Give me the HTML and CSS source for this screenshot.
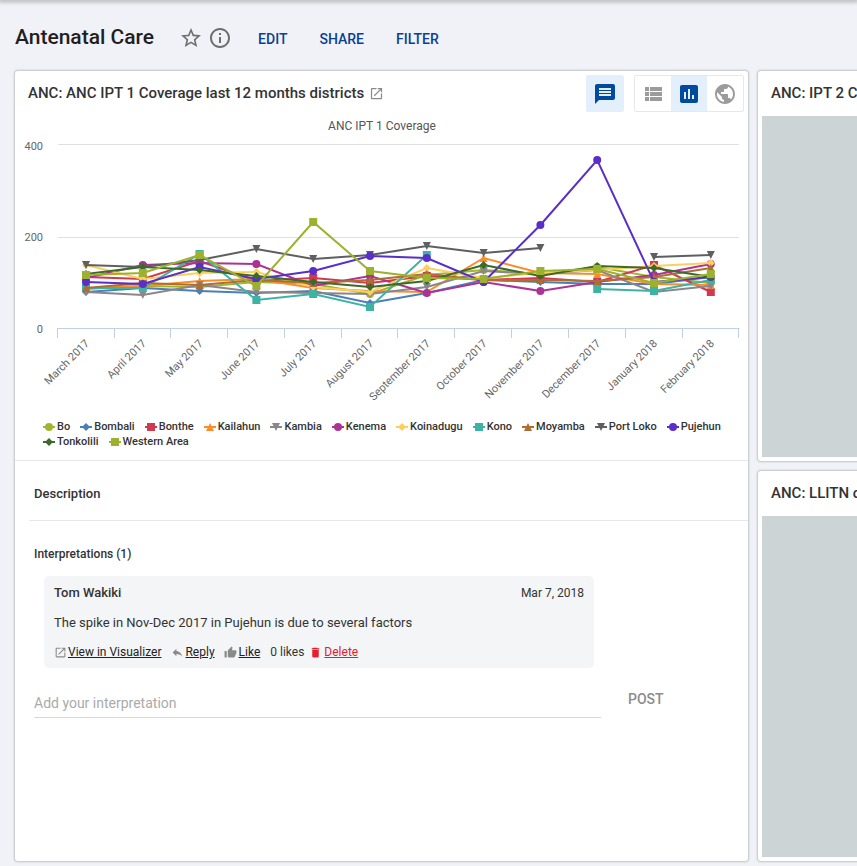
FILE: index.html
```html
<!DOCTYPE html>
<html lang="en">
<head>
    <meta charset="UTF-8">
    <title>Antenatal Care</title>
    <link rel="stylesheet" href="styles.css">
</head>
<body>
<div class="topbar"></div>
<div class="page-head">
    <h1>Antenatal Care</h1>
    <svg class="head-icon star" viewBox="0 0 24 24"><path d="M22 9.24l-7.19-.62L12 2 9.19 8.63 2 9.24l5.46 4.73L5.82 21 12 17.27 18.18 21l-1.63-7.03L22 9.24zM12 15.4l-3.76 2.27 1-4.28-3.32-2.88 4.38-.38L12 6.1l1.71 4.04 4.38.38-3.32 2.88 1 4.28L12 15.4z"/></svg>
    <svg class="head-icon info" viewBox="0 0 24 24"><path d="M11 17h2v-6h-2v6zm1-15C6.48 2 2 6.48 2 12s4.48 10 10 10 10-4.48 10-10S17.52 2 12 2zm0 18c-4.41 0-8-3.59-8-8s3.59-8 8-8 8 3.59 8 8-3.59 8-8 8zM11 9h2V7h-2v2z"/></svg>
    <nav class="head-links">
        <a href="#">EDIT</a>
        <a href="#">SHARE</a>
        <a href="#">FILTER</a>
    </nav>
</div>
<div class="grid">
    <div class="card card-main">
        <div class="card-head">
            <div class="card-title">
                ANC: ANC IPT 1 Coverage last 12 months districts
                <svg class="open-icon" viewBox="0 0 24 24"><path d="M19 19H5V5h7V3H5c-1.11 0-2 .9-2 2v14c0 1.1.89 2 2 2h14c1.1 0 2-.9 2-2v-7h-2v7zM14 3v2h3.59l-9.83 9.83 1.41 1.41L19 6.41V10h2V3h-7z"/></svg>
            </div>
            <div class="tools">
                <span class="tool tool-comment">
                    <svg class="tool-icon blue" viewBox="0 0 24 24"><path d="M20 2H4c-1.1 0-1.99.9-1.99 2L2 22l4-4h14c1.1 0 2-.9 2-2V4c0-1.1-.9-2-2-2zm-2 12H6v-2h12v2zm0-3H6V9h12v2zm0-3H6V6h12v2z"/></svg>
                </span>
                <div class="tool-group">
                    <span class="tool">
                        <svg class="tool-icon" viewBox="0 0 24 24"><path d="M4 14h4v-4H4v4zm0 5h4v-4H4v4zM4 9h4V5H4v4zm5 5h12v-4H9v4zm0 5h12v-4H9v4zM9 5v4h12V5H9z"/></svg>
                    </span>
                    <span class="tool active">
                        <svg class="tool-icon blue" viewBox="0 0 24 24"><path d="M19 3H5c-1.1 0-2 .9-2 2v14c0 1.1.9 2 2 2h14c1.1 0 2-.9 2-2V5c0-1.1-.9-2-2-2zM9 17H7v-7h2v7zm4 0h-2V7h2v10zm4 0h-2v-4h2v4z"/></svg>
                    </span>
                    <span class="tool">
                        <svg class="tool-icon" viewBox="0 0 24 24"><path d="M12 2C6.48 2 2 6.48 2 12s4.48 10 10 10 10-4.48 10-10S17.52 2 12 2zm-1 17.93c-3.95-.49-7-3.85-7-7.93 0-.62.08-1.21.21-1.79L9 15v1c0 1.1.9 2 2 2v1.93zm6.9-2.54c-.26-.81-1-1.39-1.9-1.39h-1v-3c0-.55-.45-1-1-1H8v-2h2c.55 0 1-.45 1-1V7h2c1.1 0 2-.9 2-2v-.41c2.93 1.19 5 4.06 5 7.41 0 2.08-.8 3.97-2.1 5.39z"/></svg>
                    </span>
                </div>
            </div>
        </div>
        <svg id="chart" class="chart" viewBox="15 116 733 300"></svg>
        <div id="legend" class="legend"></div>
        <div class="description">Description</div>
        <div class="interpretations">
            <h3>Interpretations (1)</h3>
            <div class="comment">
                <div class="comment-top">
                    <span class="author">Tom Wakiki</span>
                    <span class="date">Mar 7, 2018</span>
                </div>
                <div class="comment-text">The spike in Nov-Dec 2017 in Pujehun is due to several factors</div>
                <div class="comment-actions">
                    <svg class="act-icon" viewBox="0 0 24 24"><path d="M19 19H5V5h7V3H5c-1.11 0-2 .9-2 2v14c0 1.1.89 2 2 2h14c1.1 0 2-.9 2-2v-7h-2v7zM14 3v2h3.59l-9.83 9.83 1.41 1.41L19 6.41V10h2V3h-7z"/></svg>
                    <a href="#">View in Visualizer</a>
                    <svg class="act-icon reply-icon" viewBox="0 0 24 24"><path d="M10 9V5l-7 7 7 7v-4.1c5 0 8.5 1.6 11 5.1-1-5-4-10-11-11z"/></svg>
                    <a href="#">Reply</a>
                    <svg class="act-icon like-icon" viewBox="0 0 24 24"><path d="M1 21h4V9H1v12zm22-11c0-1.1-.9-2-2-2h-6.31l.95-4.57.03-.32c0-.41-.17-.79-.44-1.06L14.17 1 7.59 7.59C7.22 7.95 7 8.45 7 9v10c0 1.1.9 2 2 2h9c.83 0 1.54-.5 1.84-1.22l3.02-7.05c.09-.23.14-.47.14-.73v-2z"/></svg>
                    <a href="#">Like</a>
                    <span class="likes">0 likes</span>
                    <svg class="act-icon del-icon" viewBox="0 0 24 24"><path d="M6 19c0 1.1.9 2 2 2h8c1.1 0 2-.9 2-2V7H6v12zM19 4h-3.5l-1-1h-7l-1 1H5v2h14V4z"/></svg>
                    <a href="#" class="red-link">Delete</a>
                </div>
            </div>
            <div class="add-row">
                <div class="add-input">Add your interpretation</div>
                <span class="post">POST</span>
            </div>
        </div>
    </div>
    <div class="card card-side">
        <div class="card-title side-title">ANC: IPT 2 Coverage last 12 months districts</div>
        <div class="placeholder"></div>
    </div>
    <div class="card card-side">
        <div class="card-title side-title">ANC: LLITN coverage last 12 months districts</div>
        <div class="placeholder"></div>
    </div>
</div>
<script src="chart.js"></script>
</body>
</html>
```
FILE: styles.css
```css
*{
    margin: 0;
    padding: 0;
    box-sizing: border-box;
}
html,body{
    width: 857px;
    height: 866px;
    overflow: hidden;
}
body{
    background-color: #f1f2f7;
    font-family: Roboto, "Liberation Sans", sans-serif;
    color: #333333;
}
a{
    color: inherit;
}
.topbar{
    height: 0;
    box-shadow: 0 0 4px 2px rgba(0,0,0,.28);
}
.page-head{
    height: 71px;
    padding: 24px 0 0 15px;
    display: flex;
    align-items: flex-start;
}
.page-head h1{
    font-size: 21px;
    line-height: 26px;
    font-weight: 500;
    color: #1f1f1f;
    margin-right: 25px;
}
.head-icon{
    width: 24px;
    height: 24px;
    fill: #6e6e6e;
    margin-top: 2px;
}
.star{
    margin-right: 5px;
}
.head-links{
    margin-left: 26px;
    display: flex;
    gap: 32px;
    padding-top: 7px;
}
.head-links a{
    font-size: 14px;
    line-height: 16px;
    font-weight: 500;
    color: #0b3f94;
    text-decoration: none;
}
.grid{
    display: grid;
    grid-template-columns: 733px 733px;
    grid-template-rows: 390px 390px;
    column-gap: 10px;
    row-gap: 10px;
    margin-left: 15px;
}
.card{
    background-color: #ffffff;
    border-radius: 3px;
    box-shadow: 0 0 2px 1px rgba(0,0,0,.2);
    overflow: hidden;
}
.card-main{
    grid-row: 1 / 3;
}
.card-head{
    height: 45px;
    display: flex;
    justify-content: space-between;
    padding: 4px 4px 0 13px;
}
.card-title{
    font-size: 15px;
    line-height: 16px;
    font-weight: 500;
    color: #333333;
    padding-top: 10px;
    white-space: nowrap;
}
.open-icon{
    width: 15px;
    height: 15px;
    fill: #8a8a8a;
    vertical-align: -3px;
    margin-left: 1px;
}
.tools{
    display: flex;
    gap: 10px;
}
.tool{
    width: 36px;
    height: 37px;
    display: flex;
    align-items: center;
    justify-content: center;
}
.tool-comment{
    width: 38px;
    background-color: #e3f0fb;
    border-radius: 2px;
}
.tool-group{
    display: flex;
    border: 1px solid #e8e8e8;
    border-radius: 2px;
    height: 37px;
}
.tool-group .tool{
    height: 35px;
}
.active{
    background-color: #e3f0fb;
}
.tool-icon{
    width: 24px;
    height: 24px;
    fill: #9b9b9b;
}
.blue{
    fill: #004ba0;
}
.chart{
    display: block;
    width: 733px;
    height: 300px;
}
.chart-title{
    font-size: 12px;
    fill: #555555;
    text-anchor: middle;
}
.y-label{
    font-size: 11px;
    fill: #666666;
    text-anchor: end;
}
.x-label{
    font-size: 11px;
    fill: #666666;
    text-anchor: end;
}
.legend{
    height: 44px;
    padding: 3px 20px 0 28px;
    display: flex;
    flex-wrap: wrap;
    align-content: flex-start;
    column-gap: 10px;
}
.legend-item{
    display: flex;
    align-items: center;
    height: 15px;
    font-size: 11px;
    font-weight: 500;
    color: #333333;
}
.legend-item svg{
    width: 12px;
    height: 12px;
    margin-right: 2px;
}
.description{
    border-top: 1px solid #e8e8e8;
    height: 60px;
    padding: 25px 0 0 19px;
    font-size: 13px;
    line-height: 16px;
    font-weight: 500;
    color: #333333;
}
.description::after{
    content: "";
    display: block;
    border-bottom: 1px solid #e8e8e8;
    margin: 18px 0 0 -5px;
}
.interpretations{
    padding: 26px 0 0 19px;
}
.interpretations h3{
    font-size: 12px;
    line-height: 16px;
    font-weight: 500;
    color: #333333;
}
.comment{
    width: 550px;
    height: 92px;
    margin: 14px 0 0 10px;
    padding: 9px 10px 0;
    background-color: #f4f5f7;
    border-radius: 5px;
}
.comment-top{
    display: flex;
    justify-content: space-between;
    line-height: 16px;
}
.author{
    font-size: 13px;
    font-weight: 500;
}
.date{
    font-size: 12px;
}
.comment-text{
    font-size: 13px;
    line-height: 16px;
    margin-top: 14px;
}
.comment-actions{
    display: flex;
    align-items: center;
    font-size: 12px;
    line-height: 16px;
    margin-top: 13px;
}
.comment-actions a{
    color: #222222;
}
.act-icon{
    width: 13px;
    height: 13px;
    fill: #8a8a8a;
    margin-right: 1px;
}
.reply-icon{
    margin-left: 10px;
}
.like-icon{
    margin-left: 9px;
    margin-right: 2px;
}
.likes{
    margin-left: 10px;
}
.del-icon{
    margin-left: 5px;
    margin-right: 2px;
    fill: #e5202e;
}
.comment-actions .red-link{
    color: #e5202e;
}
.add-row{
    display: flex;
    margin-top: 27px;
}
.add-input{
    width: 567px;
    height: 23px;
    font-size: 14px;
    line-height: 16px;
    color: #aaaaaa;
    border-bottom: 1px solid #d9d9d9;
}
.post{
    margin: -4px 0 0 27px;
    font-size: 14px;
    line-height: 16px;
    font-weight: 500;
    color: #8c8c8c;
}
.card-side{
    padding: 0 0 4px 4px;
    display: flex;
    flex-direction: column;
}
.side-title{
    height: 45px;
    padding: 14px 0 0 9px;
}
.placeholder{
    flex: 1;
    background-color: #ccd4d5;
}
```
FILE: chart.js
```js
(function () {
    var NS = "http://www.w3.org/2000/svg";
    var aMonth = ["March 2017", "April 2017", "May 2017", "June 2017", "July 2017", "August 2017",
        "September 2017", "October 2017", "November 2017", "December 2017", "January 2018", "February 2018"];
    // y values are pixels on the plot, null = no data
    var aSeries = [
        {name: "Bo", color: "#a1b52e", mark: "circle", y: [289, 286, 287, 282, 284, 294, 275, 270, 274, 267, 277, 283]},
        {name: "Bombali", color: "#4a7fb8", mark: "diamond", y: [292, 288, 291, 293, 291, 303, 293, 280, 282, 284, 284, 277]},
        {name: "Bonthe", color: "#d0394f", mark: "square", y: [277, 279, 261, 281, 278, 283, 276, 280, 278, 282, 265, 292]},
        {name: "Kailahun", color: "#fa8c2b", mark: "triangle", y: [288, 286, 281, 279, 288, 291, 292, 258, 273, 274, 284, 285]},
        {name: "Kambia", color: "#8a868a", mark: "down", y: [292, 295, 285, 292, 293, 294, 287, 271, 274, 270, 292, 286]},
        {name: "Kenema", color: "#ab3396", mark: "circle", y: [278, 265, 263, 264, 286, 276, 293, 282, 291, 282, 275, 264]},
        {name: "Koinadugu", color: "#fdd05e", mark: "diamond", y: [265, 279, 273, 272, 287, 292, 268, 278, 273, 270, 266, 263]},
        {name: "Kono", color: "#3fb3a3", mark: "square", y: [288, 288, 254, 300, 294, 307, 255, null, null, 289, 291, 280]},
        {name: "Moyamba", color: "#ae6e30", mark: "triangle", y: [288, 283, 285, 280, 283, 280, 274, 280, 280, 281, 277, 268]},
        {name: "Port Loko", color: "#5f5f5f", mark: "down", y: [265, 267, 260, 249, 259, 255, 246, 253, 248, null, 257, 255]},
        {name: "Pujehun", color: "#5a2fc9", mark: "circle", y: [282, 284, 267, 279, 271, 256, 258, 282, 225, 160, 282, 277]},
        {name: "Tonkolili", color: "#3c6b28", mark: "diamond", y: [274, 267, 270, 276, 282, 287, 281, 265, 276, 266, 268, 277]},
        {name: "Western Area", color: "#9cb22e", mark: "square", y: [275, 273, 255, 286, 222, 271, 278, 279, 271, 269, 283, 274]}
    ];
    var oChart = document.getElementById("chart");
    var oLegend = document.getElementById("legend");

    function el(name, attrs, parent, text) {
        var o = document.createElementNS(NS, name);
        for (var k in attrs) {
            o.setAttribute(k, attrs[k]);
        }
        if (text) {
            o.textContent = text;
        }
        parent.appendChild(o);
        return o;
    }
    function marker(parent, kind, x, y, color) {
        if (kind === "circle") {
            el("circle", {cx: x, cy: y, r: 4, fill: color}, parent);
        } else if (kind === "square") {
            el("rect", {x: x - 4, y: y - 4, width: 8, height: 8, fill: color}, parent);
        } else {
            var d = {
                diamond: [x, y - 4, x + 4, y, x, y + 4, x - 4, y],
                triangle: [x, y - 4, x + 4, y + 4, x - 4, y + 4],
                down: [x - 4, y - 4, x + 4, y - 4, x, y + 4]
            };
            el("polygon", {points: d[kind].join(" "), fill: color}, parent);
        }
    }
    function px(i) {
        return 86 + i * 56.8;
    }

    el("text", {x: 382, y: 130, "class": "chart-title"}, oChart, "ANC IPT 1 Coverage");
    [144.5, 237.5].forEach(function (y) {
        el("line", {x1: 58, x2: 739, y1: y, y2: y, stroke: "#e0e0e0"}, oChart);
    });
    [[400, 149.5], [200, 241], [0, 333]].forEach(function (a) {
        el("text", {x: 43, y: a[1], "class": "y-label"}, oChart, String(a[0]));
    });
    el("line", {x1: 58, x2: 739.5, y1: 328.5, y2: 328.5, stroke: "#c0d0e8"}, oChart);
    for (var t = 0; t <= 12; t++) {
        var tx = Math.round(57.7 + t * 56.8) - 0.5;
        el("line", {x1: tx, x2: tx, y1: 328, y2: 338, stroke: "#c0d0e8"}, oChart);
    }
    aMonth.forEach(function (m, i) {
        var x = px(i) + 4, y = 344;
        el("text", {x: x, y: y, "class": "x-label", transform: "rotate(-45 " + x + " " + y + ")"}, oChart, m);
    });

    aSeries.forEach(function (s) {
        var pts = [];
        function flush() {
            if (pts.length > 1) {
                el("polyline", {points: pts.join(" "), fill: "none", stroke: s.color, "stroke-width": 2}, oChart);
            }
            pts = [];
        }
        s.y.forEach(function (v, i) {
            if (v === null) {
                flush();
            } else {
                pts.push(px(i) + "," + v);
            }
        });
        flush();
        s.y.forEach(function (v, i) {
            if (v !== null) {
                marker(oChart, s.mark, px(i), v, s.color);
            }
        });

        var item = document.createElement("div");
        item.className = "legend-item";
        var icon = el("svg", {viewBox: "0 0 12 12"}, item);
        el("line", {x1: 0, x2: 12, y1: 6, y2: 6, stroke: s.color, "stroke-width": 2}, icon);
        marker(icon, s.mark, 6, 6, s.color);
        item.appendChild(document.createTextNode(s.name));
        oLegend.appendChild(item);
    });
})();
```
